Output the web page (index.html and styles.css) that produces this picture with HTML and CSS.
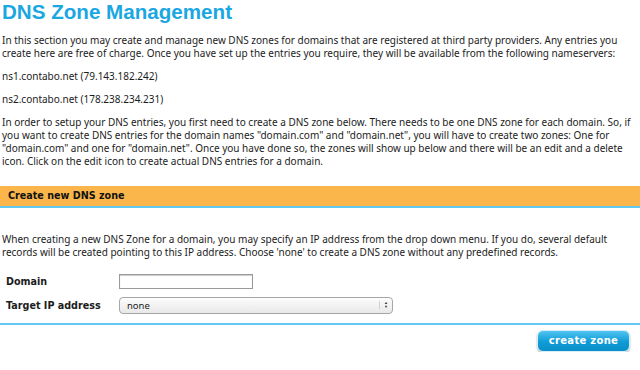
FILE: index.html
```html
<!DOCTYPE html>
<html>
<head>
<meta charset="utf-8">
<link rel="stylesheet" href="styles.css">
</head>
<body>
<div class="page">
  <h1 class="title">DNS Zone Management</h1>
  <p class="text">In this section you may create and manage new DNS zones for domains that are registered at third party providers. Any entries you create here are free of charge. Once you have set up the entries you require, they will be available from the following nameservers:</p>
  <p class="text">ns1.contabo.net (79.143.182.242)</p>
  <p class="text">ns2.contabo.net (178.238.234.231)</p>
  <p class="text">In order to setup your DNS entries, you first need to create a DNS zone below. There needs to be one DNS zone for each domain. So, if you want to create DNS entries for the domain names "domain.com" and "domain.net", you will have to create two zones: One for "domain.com" and one for "domain.net". Once you have done so, the zones will show up below and there will be an edit and a delete icon. Click on the edit icon to create actual DNS entries for a domain.</p>

  <div class="section-bar">Create new DNS zone</div>

  <p class="text intro">When creating a new DNS Zone for a domain, you may specify an IP address from the drop down menu. If you do, several default records will be created pointing to this IP address. Choose 'none' to create a DNS zone without any predefined records.</p>

  <div class="form">
    <div class="row">
      <label class="label">Domain</label>
      <input class="input" type="text">
    </div>
    <div class="row">
      <label class="label">Target IP address</label>
      <div class="select"><span>none</span><span class="arrows">&#9650;<br>&#9660;</span></div>
    </div>
  </div>

  <div class="actions">
    <button class="btn">create zone</button>
  </div>
</div>
</body>
</html>
```

FILE: styles.css
```css
html, body {
  margin: 0;
  padding: 0;
  background: #ffffff;
}
.page {
  width: 640px;
  font-family: "Noto Sans", "Open Sans", sans-serif;
  font-size: 10px;
  color: #1c1c1c;
}
.title {
  margin: 0;
  padding: 0 0 0 2px;
  font-family: "Liberation Sans", Arial, sans-serif;
  font-size: 20.6px;
  font-weight: bold;
  color: #1ba7e1;
  line-height: 23px;
}
.text {
  margin: 0;
  padding: 0 2px;
  line-height: 13px;
}
.title + .text { margin-top: 10.5px; }
.text + .text { margin-top: 10px; }
.section-bar {
  margin-top: 18.5px;
  height: 20px;
  line-height: 20px;
  background: #fbb64b;
  border-bottom: 2px solid #63c8ef;
  padding-left: 8px;
  font-family: "DejaVu Sans", sans-serif;
  font-weight: bold;
  font-size: 9.6px;
  color: #111;
}
.intro { margin-top: 24.5px; }
.form {
  margin-top: 15px;
  padding-left: 6px;
  padding-bottom: 9px;
  border-bottom: 2px solid #63c8ef;
  display: flex;
  flex-direction: column;
  gap: 8px;
}
.row {
  display: flex;
  align-items: center;
}
.label {
  width: 113px;
  font-family: "DejaVu Sans", sans-serif;
  font-size: 9.6px;
  font-weight: bold;
}
.input {
  box-sizing: border-box;
  width: 134px;
  height: 15px;
  margin: 0;
  border: 1px solid #9a9a9a;
  box-shadow: inset 0 1px 1px #ccc;
  background: #fff;
  padding: 0;
}
.select {
  box-sizing: border-box;
  width: 274px;
  height: 17px;
  border: 1px solid #a6a6a6;
  border-radius: 4px;
  background: linear-gradient(#fdfdfd, #e8e8e8);
  display: flex;
  align-items: center;
  justify-content: space-between;
  padding-left: 7px;
  font-size: 9.5px;
}
.arrows {
  font-size: 4px;
  line-height: 4px;
  padding: 0 4px;
  border-left: 1px solid #d0d0d0;
  text-align: center;
  color: #333;
}
.actions {
  display: flex;
  justify-content: flex-end;
  padding: 5px 10px 0 0;
}
.btn {
  width: 93px;
  height: 22px;
  border: 1px solid #d6eef8;
  border-radius: 6px;
  background: linear-gradient(#4fc5f0, #0f9bd6 55%, #0a8fc8);
  box-shadow: 0 1px 2px rgba(0,0,0,0.35);
  color: #fff;
  font-family: "DejaVu Sans", sans-serif;
  font-weight: bold;
  font-size: 10px;
  letter-spacing: 0.3px;
  padding: 0;
}
```
